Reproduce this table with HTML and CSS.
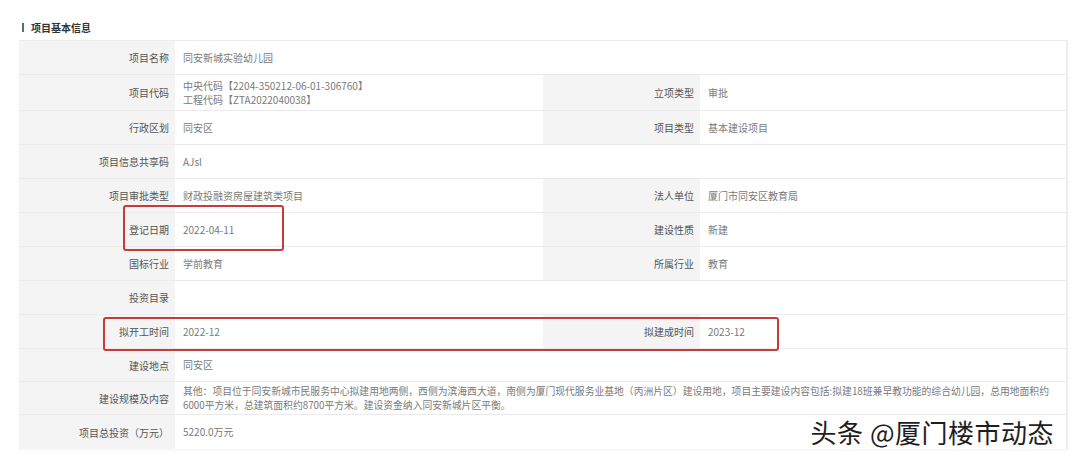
FILE: index.html
```html
<!DOCTYPE html>
<html lang="zh">
<head>
<meta charset="utf-8">
<title>项目基本信息</title>
<link rel="stylesheet" href="styles.css">
</head>
<body>
<div class="page">
  <div class="title"><span class="bar"></span>项目基本信息</div>
  <div class="table">
    <div class="row"><div class="lbl">项目名称</div><div class="val span3">同安新城实验幼儿园</div></div>
    <div class="row tall"><div class="lbl">项目代码</div><div class="val two"><span>中央代码【2204-350212-06-01-306760】</span><span>工程代码【ZTA2022040038】</span></div><div class="lbl">立项类型</div><div class="val">审批</div></div>
    <div class="row"><div class="lbl">行政区划</div><div class="val">同安区</div><div class="lbl">项目类型</div><div class="val">基本建设项目</div></div>
    <div class="row"><div class="lbl">项目信息共享码</div><div class="val span3">AJsl</div></div>
    <div class="row"><div class="lbl">项目审批类型</div><div class="val">财政投融资房屋建筑类项目</div><div class="lbl">法人单位</div><div class="val">厦门市同安区教育局</div></div>
    <div class="row"><div class="lbl">登记日期</div><div class="val">2022-04-11</div><div class="lbl">建设性质</div><div class="val">新建</div></div>
    <div class="row"><div class="lbl">国标行业</div><div class="val">学前教育</div><div class="lbl">所属行业</div><div class="val">教育</div></div>
    <div class="row"><div class="lbl">投资目录</div><div class="val span3"></div></div>
    <div class="row"><div class="lbl">拟开工时间</div><div class="val">2022-12</div><div class="lbl">拟建成时间</div><div class="val">2023-12</div></div>
    <div class="row short"><div class="lbl">建设地点</div><div class="val span3">同安区</div></div>
    <div class="row short"><div class="lbl">建设规模及内容</div><div class="val span3 two multi"><span>其他：项目位于同安新城市民服务中心拟建用地两侧，西侧为滨海西大道，南侧为厦门现代服务业基地（丙洲片区）建设用地，项目主要建设内容包括:拟建18班兼早教功能的综合幼儿园，总用地面积约</span><span>6000平方米，总建筑面积约8700平方米。建设资金纳入同安新城片区平衡。</span></div></div>
    <div class="row last"><div class="lbl">项目总投资（万元）</div><div class="val span3">5220.0万元</div></div>
    <div class="mark mark-a"></div>
    <div class="mark mark-b"></div>
  </div>
  <div class="credit">头条 @厦门楼市动态</div>
</div>
</body>
</html>
```
FILE: styles.css
```css
* { box-sizing: border-box; }
html, body { margin: 0; padding: 0; background: #fff; }
body {
  font-family: "Noto Sans CJK SC", "Microsoft YaHei", "Liberation Sans", sans-serif;
  font-size: 10px;
  color: #666;
  width: 1080px;
  height: 459px;
  overflow: hidden;
}
.page {
  position: relative;
  padding: 20px 12px 0 19px;
}
.title {
  display: flex;
  align-items: center;
  height: 14px;
  padding-left: 3px;
  font-size: 10px;
  font-weight: 700;
  color: #333;
}
.bar {
  display: inline-block;
  width: 2px;
  height: 9px;
  background: #5a6b7c;
  margin-right: 7px;
}
.table {
  position: relative;
  margin-top: 6px;
  width: 1049px;
  border-top: 1px solid #ececec;
  border-right: 2px solid #eeeeee;
  box-shadow: 0 1px 3px rgba(0,0,0,0.05);
}
.row {
  display: grid;
  grid-template-columns: 156px 368px 157px 1fr;
  min-height: 34px;
  border-bottom: 1px solid #ebebeb;
}
.row.tall { min-height: 36px; }
.row.short { min-height: 33px; }
.row.last { border-bottom: none; }
.lbl {
  background: #f4f4f4;
  color: #555;
  display: flex;
  align-items: center;
  justify-content: flex-end;
  padding-right: 6px;
  white-space: nowrap;
}
.val {
  display: flex;
  flex-direction: column;
  justify-content: center;
  padding-left: 8px;
  color: #7a7a7a;
  line-height: 14px;
  white-space: nowrap;
}
.val.two span { display: block; height: 14px; line-height: 14px; }
.val.span3 { grid-column: 2 / 5; }
.val.multi { font-size: 9.8px; }
.mark {
  position: absolute;
  border: 2px solid #c93a3c;
  border-radius: 3px;
  pointer-events: none;
}
.mark-a { left: 104px; top: 164px; width: 161px; height: 46px; }
.mark-b { left: 84px; top: 276px; width: 676px; height: 34px; }
.credit {
  position: absolute;
  right: 26px;
  top: 413px;
  font-size: 26px;
  color: #1e1e1e;
  text-shadow: 0 0 2px #fff, 0 0 2px #fff;
  letter-spacing: 0.5px;
}
```
